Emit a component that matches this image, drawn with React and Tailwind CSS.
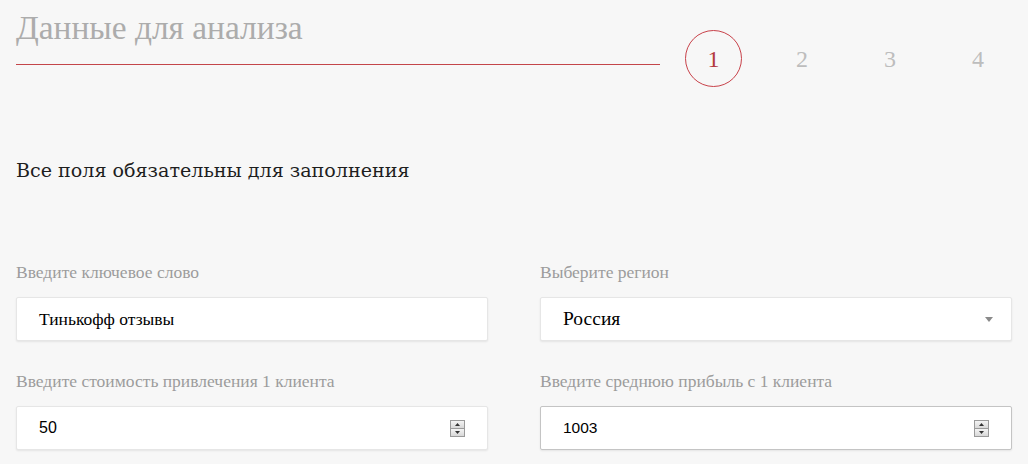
import React from "react";

const serif = { fontFamily: '"Liberation Serif", "DejaVu Serif", serif' };
const serif2 = { fontFamily: '"DejaVu Serif", "Liberation Serif", serif' };
const sans = { fontFamily: '"Liberation Sans", Arial, sans-serif' };

function Spinner() {
  return (
    <div className="flex flex-col w-[15px] h-[17px] border border-[#9a9a9a] bg-[#e4e4e4]">
      <div className="flex-1 flex items-center justify-center border-b border-[#9a9a9a] bg-gradient-to-b from-[#f4f4f4] to-[#d8d8d8]">
        <svg width="5" height="3" viewBox="0 0 5 3"><path d="M2.5 0L5 3H0z" fill="#333" /></svg>
      </div>
      <div className="flex-1 flex items-center justify-center bg-gradient-to-b from-[#f4f4f4] to-[#d8d8d8]">
        <svg width="5" height="3" viewBox="0 0 5 3"><path d="M0 0h5L2.5 3z" fill="#333" /></svg>
      </div>
    </div>
  );
}

function Field({ label, children, focused }) {
  return (
    <div className="flex flex-col">
      <div className="text-[17.5px] text-[#9c9c9c] leading-[20px] mb-[15px]" style={serif}>
        {label}
      </div>
      <div
        className={
          "h-[44px] bg-white flex items-center pl-[22px] pr-[22px] rounded-[2px] shadow-[0_1px_2px_rgba(0,0,0,0.08)] border " +
          (focused ? "border-[#c4c4c4]" : "border-[#e6e6e6]")
        }
      >
        {children}
      </div>
    </div>
  );
}

export default function App() {
  return (
    <div className="w-[1028px] h-[464px] bg-[#f7f7f7] overflow-hidden pl-[16px] pr-[16px]">
      <div className="flex items-start">
        <div className="w-[644px] shrink-0 border-b border-[#c4464a] h-[65px]">
          <h1 className="text-[33.4px] leading-[55px] text-[#acacac]" style={serif}>
            Данные для анализа
          </h1>
        </div>
        <div className="flex items-center mt-[30px] ml-[25px]" style={serif}>
          <div className="w-[57px] h-[57px] shrink-0 rounded-full border border-[#c8424a] flex items-center justify-center text-[24px] text-[#b33a40]">
            1
          </div>
          <div className="w-[88px] text-center text-[24px] text-[#bdbdbd] ml-[16px]">2</div>
          <div className="w-[88px] text-center text-[24px] text-[#bdbdbd]">3</div>
          <div className="w-[88px] text-center text-[24px] text-[#bdbdbd]">4</div>
        </div>
      </div>

      <p className="mt-[70px] text-[19.1px] text-[#1e1e1e] leading-[28px]" style={serif2}>
        Все поля обязательны для заполнения
      </p>

      <div className="grid grid-cols-2 gap-x-[52px] gap-y-[30px] mt-[77px] w-[996px]">
        <Field label="Введите ключевое слово">
          <span className="text-[17.5px] text-black" style={serif}>Тинькофф отзывы</span>
        </Field>
        <Field label="Выберите регион">
          <span className="flex-1 text-[19.5px] text-black" style={serif}>Россия</span>
          <svg width="8" height="5" viewBox="0 0 8 5" className="-mr-[4px]"><path d="M0 0h8L4 5z" fill="#8a8a8a" /></svg>
        </Field>
        <Field label="Введите стоимость привлечения 1 клиента">
          <span className="flex-1 text-[16px] text-black" style={sans}>50</span>
          <Spinner />
        </Field>
        <Field label="Введите среднюю прибыль с 1 клиента" focused>
          <span className="flex-1 text-[15.5px] text-black" style={sans}>1003</span>
          <Spinner />
        </Field>
      </div>
    </div>
  );
}
